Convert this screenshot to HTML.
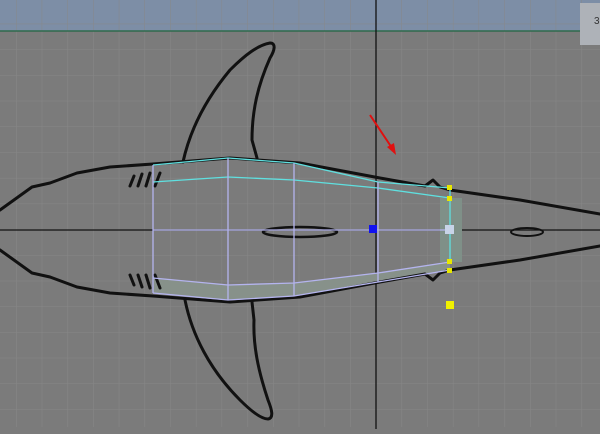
<!DOCTYPE html>
<html><head><style>
html,body{margin:0;padding:0;background:#7b7b7b;overflow:hidden}
</style></head><body>
<svg width="600" height="429" viewBox="0 0 600 429" xmlns="http://www.w3.org/2000/svg">
<defs>
<pattern id="g" x="16" y="0" width="25.7" height="25.7" patternUnits="userSpaceOnUse">
<path d="M0 0V25.7M0 0H25.7" stroke="#878787" stroke-width="1" fill="none"/>
</pattern>
</defs>
<rect width="600" height="429" fill="#7b7b7b"/>
<rect y="0" width="600" height="31" fill="#7d8ea6"/>
<rect y="-2" width="600" height="431" fill="url(#g)" transform="translate(0,-2)"/>
<line x1="0" y1="31" x2="600" y2="31" stroke="#2f6b4d" stroke-width="1.5"/>
<rect x="580" y="3" width="22" height="42" fill="#aeb2b8"/>
<text x="594" y="24" font-family="Liberation Sans, sans-serif" font-size="10" fill="#333">3</text>
<line x1="376" y1="0" x2="376" y2="429" stroke="#111" stroke-width="1.3"/>
<line x1="0" y1="230" x2="600" y2="230" stroke="#111" stroke-width="1.3"/>
<!-- mesh fill -->
<path d="M153 278 L228 285 L294 283 L378 273 L450 262 L450 270 L378 282 L294 296 L228 300 L153 293Z" fill="#87918a"/>
<rect x="440" y="198" width="22" height="64" fill="#7f9088"/>
<g fill="none" stroke="#111" stroke-width="3" stroke-linecap="round" stroke-linejoin="round">
<path d="M0 210 L32 187 L50 183 L77 173 L110 167 L153 164 L230 158 L300 163 L380 178 L425 186 L433 180 L440 187 L450 190 L520 200 L600 214"/>
<path d="M0 250 L32 273 L50 277 L77 287 L110 293 L153 296 L230 302 L300 297 L380 282 L425 274 L433 280 L440 273 L450 270 L520 260 L600 246"/>
<path d="M183 162 C190 130 205 100 230 70 C245 55 258 45 270 43 C276 43 275 50 270 58 C258 85 252 110 252 140 L257 158"/>
<path d="M185 300 C192 335 210 370 240 400 C252 412 262 419 268 419 C274 418 272 410 268 400 C258 370 253 345 254 320 L252 302"/>
<path d="M130 186 L134 176 M138 186 L142 174 M146 186 L150 173 M155 186 L160 173"/>
<path d="M130 275 L134 285 M138 275 L142 287 M146 275 L150 288 M155 275 L160 288"/>
</g>
<ellipse cx="300" cy="232" rx="37" ry="5" fill="none" stroke="#111" stroke-width="2.5"/>
<ellipse cx="527" cy="232" rx="16" ry="4" fill="none" stroke="#111" stroke-width="2"/>
<g fill="none" stroke="#5fe0e0" stroke-width="1.3">
<path d="M153 165 L228 158 L294 163 L378 182 L450 188"/>
<path d="M153 182 L228 177 L294 180 L378 188 L450 198"/>
<path d="M450 188 V262"/>
</g>
<g fill="none" stroke="#b4b4ee" stroke-width="1.3">
<path d="M153 230 H450"/>
<path d="M153 278 L228 285 L294 283 L378 273 L450 262"/>
<path d="M153 293 L228 300 L294 296 L378 282 L450 270"/>
<path d="M153 165 V293 M228 158 V300 M294 163 V296 M378 182 V282"/>
</g>
<rect x="369" y="225" width="8" height="8" fill="#1010f0"/>
<rect x="445" y="225" width="9" height="9" fill="#c8d4e8"/>
<rect x="446" y="301" width="8" height="8" fill="#f0f000"/>
<g fill="#e8e800">
<rect x="447" y="185" width="5" height="5"/><rect x="447" y="196" width="5" height="5"/>
<rect x="447" y="259" width="5" height="5"/><rect x="447" y="268" width="5" height="5"/>
</g>
<line x1="370" y1="115" x2="392" y2="148" stroke="#e01010" stroke-width="2"/>
<path d="M396 155 L387 147 L394 143Z" fill="#e01010"/>
</svg>
</body></html>
